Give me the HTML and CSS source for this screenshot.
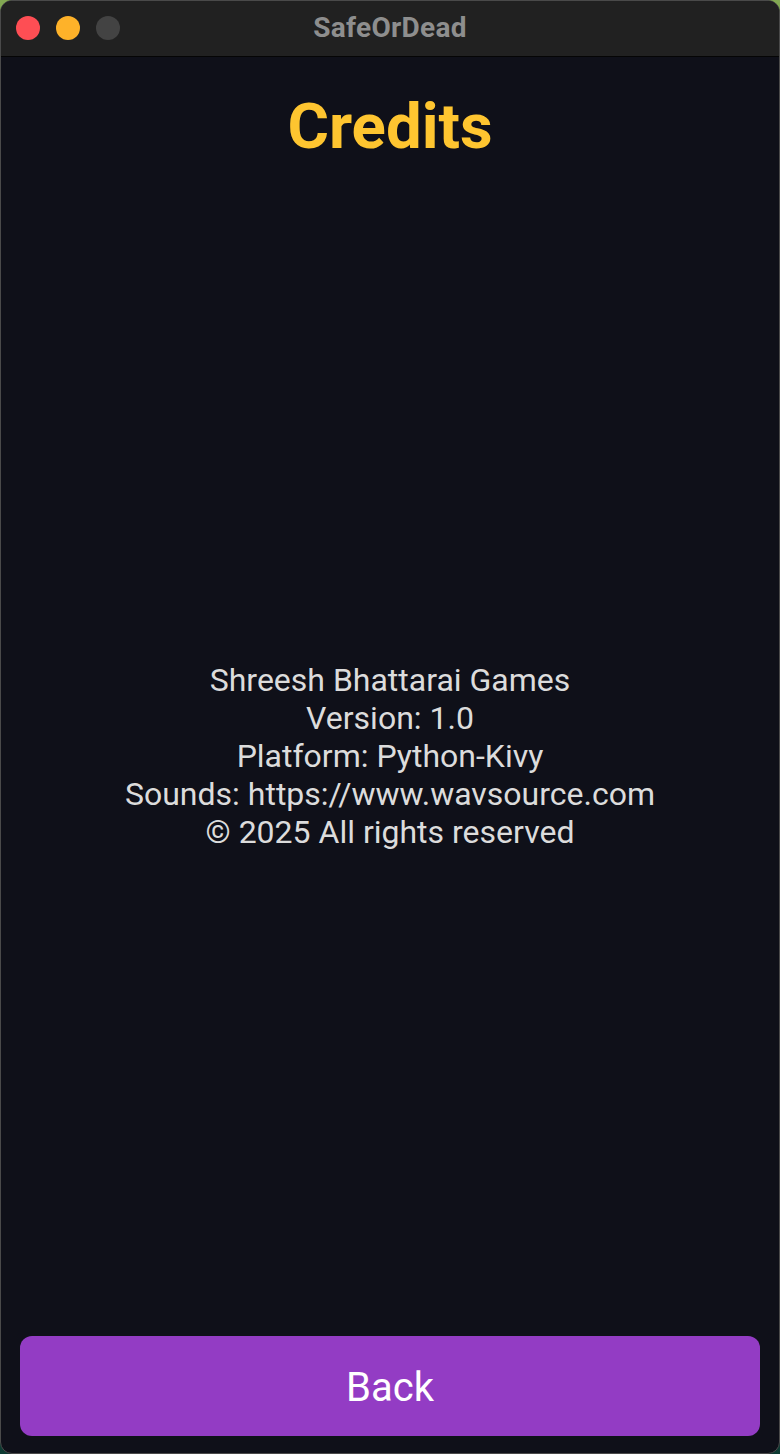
FILE: index.html
```html
<!DOCTYPE html>
<html lang="en">
<head>
<meta charset="utf-8">
<title>SafeOrDead</title>
<link rel="stylesheet" href="styles.css">
</head>
<body>
<div class="window">
  <header class="titlebar">
    <div class="lights">
      <span class="light red"></span>
      <span class="light yellow"></span>
      <span class="light gray"></span>
    </div>
    <div class="title">SafeOrDead</div>
  </header>
  <main class="content">
    <h1 class="heading">Credits</h1>
    <div class="info">
      <p>Shreesh Bhattarai Games</p>
      <p>Version: 1.0</p>
      <p>Platform: Python-Kivy</p>
      <p>Sounds: https://www.wavsource.com</p>
      <p>© 2025 All rights reserved</p>
    </div>
    <div class="actions">
      <button class="back">Back</button>
    </div>
  </main>
</div>
</body>
</html>
```

FILE: styles.css
```css
* { box-sizing: border-box; }
html, body {
  margin: 0;
  padding: 0;
  width: 780px;
  height: 1454px;
}
body {
  background: linear-gradient(to bottom, #82a852 0%, #4f7a4a 40%, #0d3a32 100%);
  font-family: Roboto, "Noto Sans", "Liberation Sans", sans-serif;
}
.window {
  width: 780px;
  height: 1454px;
  border-radius: 12px;
  overflow: hidden;
  border: 1px solid #4a4a4a;
  display: flex;
  flex-direction: column;
  background: #0f1019;
}
.titlebar {
  height: 56px;
  flex: 0 0 56px;
  background: #212121;
  border-bottom: 1px solid #050505;
  position: relative;
  display: flex;
  align-items: center;
  justify-content: center;
}
.lights {
  position: absolute;
  left: 15px;
  top: 15px;
  display: flex;
  gap: 16px;
}
.light {
  width: 24px;
  height: 24px;
  border-radius: 50%;
  display: block;
}
.red { background: #fe4e54; }
.yellow { background: #feb229; }
.gray { background: #434343; }
.title {
  color: #8e8e8e;
  font-weight: 700;
  font-size: 28px;
  letter-spacing: 0.3px;
  margin-top: -2px;
}
.content {
  flex: 1;
  display: flex;
  flex-direction: column;
  align-items: stretch;
  padding: 0 19px 17px 19px;
}
.heading {
  margin: 28px 0 0 0;
  text-align: center;
  color: #fec530;
  font-size: 63.5px;
  font-weight: 700;
  line-height: 84px;
}
.info {
  flex: 1;
  display: flex;
  flex-direction: column;
  justify-content: center;
  align-items: center;
  color: #dcdcdc;
  font-size: 32px;
  line-height: 38px;
  padding-top: 6px;
}
.info p { margin: 0; }
.actions {
  display: flex;
}
.back {
  flex: 1;
  height: 100px;
  border: none;
  border-radius: 12px;
  background: #933cc4;
  color: #ffffff;
  font-family: Roboto, "Noto Sans", "Liberation Sans", sans-serif;
  font-size: 40px;
  padding: 3px 0 0 0;
}
```
